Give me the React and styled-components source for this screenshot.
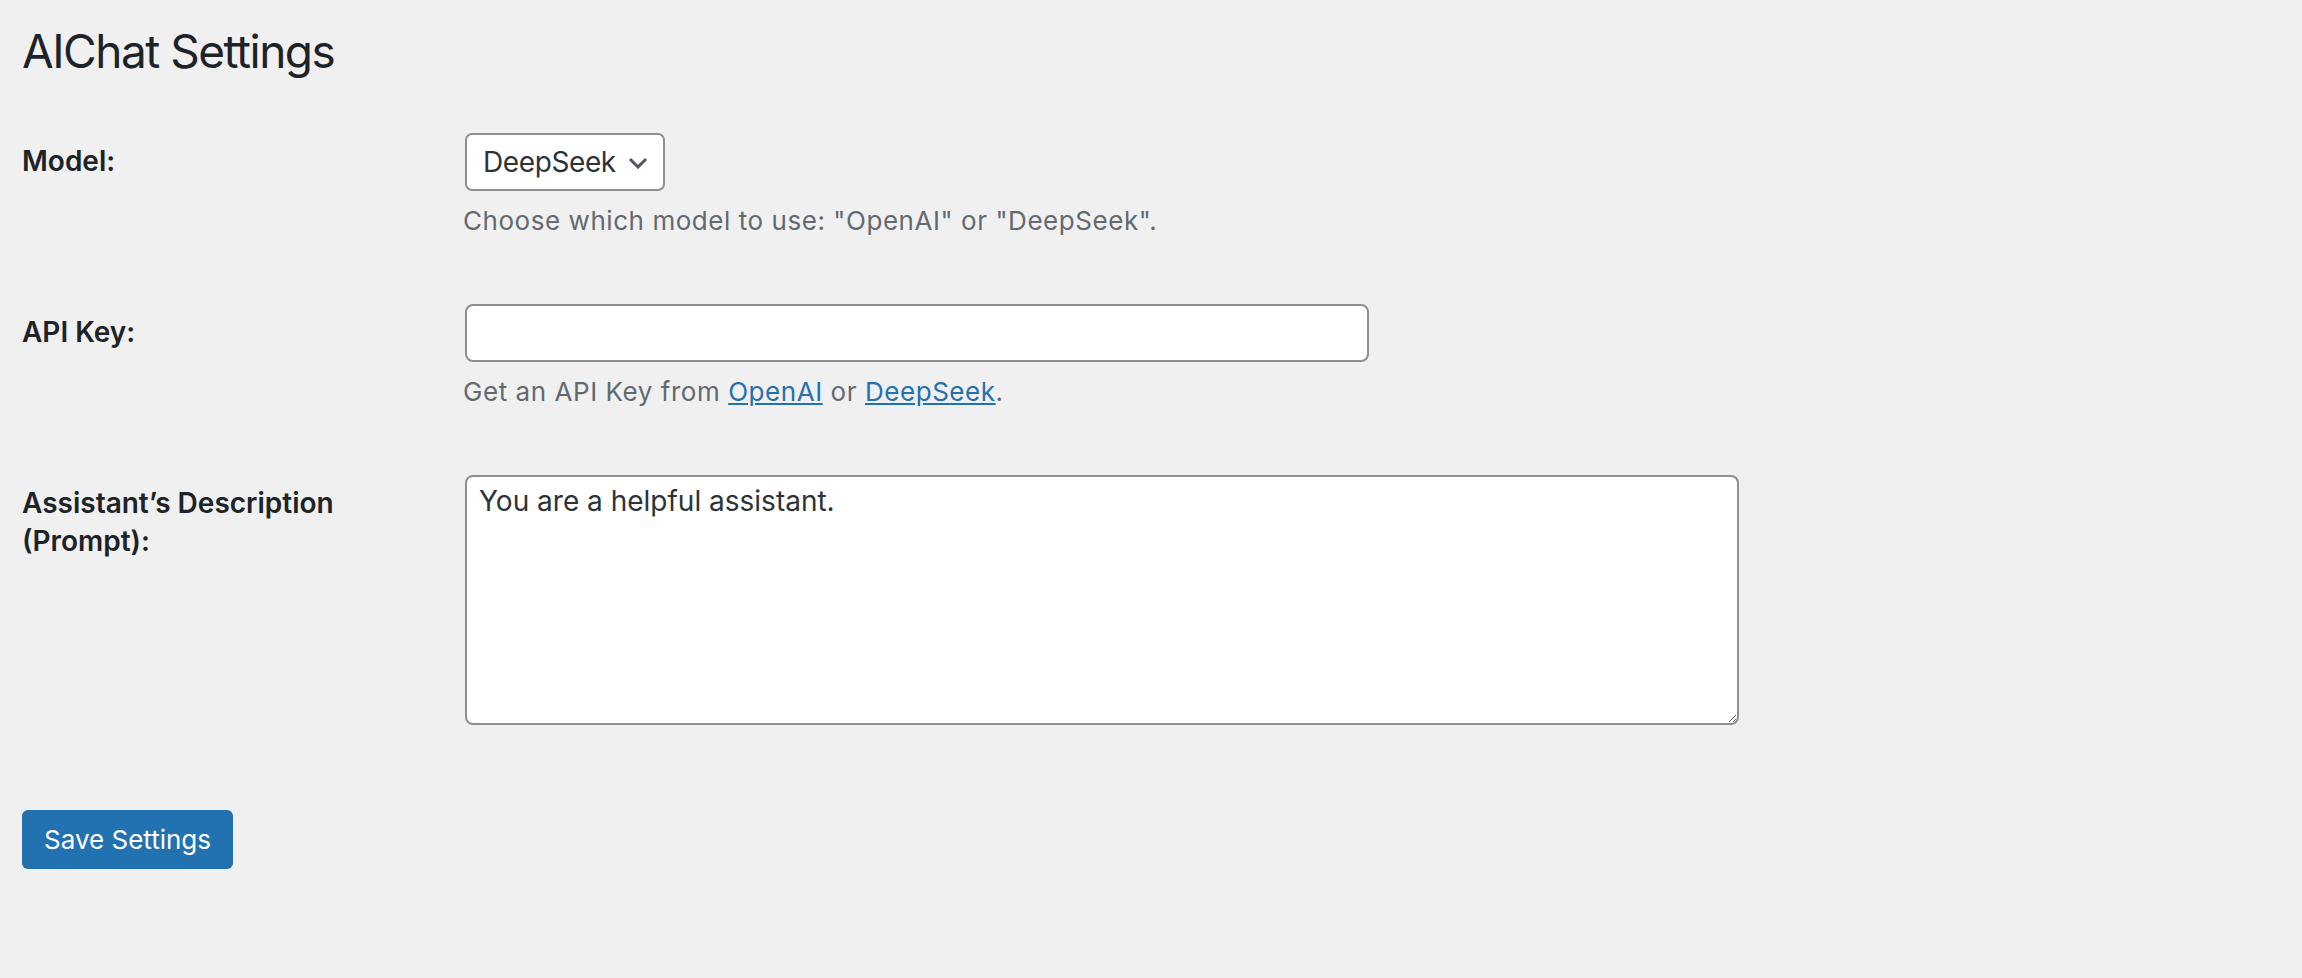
import React from "react";
import styled, { createGlobalStyle } from "styled-components";

const GlobalStyle = createGlobalStyle`
  body {
    margin: 0;
    background: #f0f0f1;
    color: #1d2327;
    font-family: Inter, "Noto Sans", sans-serif;
  }
`;

function App() {
  return (
    <>
      <GlobalStyle />
      <Wrap>
        <Title>AIChat Settings</Title>
        <Form onSubmit={(e) => e.preventDefault()}>
          <Row>
            <Label htmlFor="aichat-model">Model:</Label>
            <Field>
              <SelectBox>
                <Select id="aichat-model" defaultValue="deepseek">
                  <option value="openai">OpenAI</option>
                  <option value="deepseek">DeepSeek</option>
                </Select>
                <Chevron width="20" height="12" viewBox="0 0 20 12">
                  <path d="M2 2 L10 10 L18 2" fill="none" stroke="#50575e" strokeWidth="3" />
                </Chevron>
              </SelectBox>
              <Description>Choose which model to use: "OpenAI" or "DeepSeek".</Description>
            </Field>
          </Row>

          <Row>
            <Label htmlFor="aichat-key">API Key:</Label>
            <Field>
              <Input id="aichat-key" type="text" />
              <Description>
                Get an API Key from <Link href="#">OpenAI</Link> or{" "}
                <Link href="#">DeepSeek</Link>.
              </Description>
            </Field>
          </Row>

          <Row>
            <Label htmlFor="aichat-prompt">Assistant’s Description (Prompt):</Label>
            <Field>
              <TextArea id="aichat-prompt" defaultValue="You are a helpful assistant." />
            </Field>
          </Row>

          <Submit>
            <Button type="submit">Save Settings</Button>
          </Submit>
        </Form>
      </Wrap>
    </>
  );
}

export default App;

const Wrap = styled.div`
  padding: 3px 22px 0;
`;
const Title = styled.h1`
  margin: 0;
  padding: 18px 0 8px;
  font-size: 46px;
  font-weight: 400;
  line-height: 60px;
  letter-spacing: -1.5px;
  color: #1d2327;
`;
const Form = styled.form`
  margin-top: 13px;
`;
const Row = styled.div`
  display: grid;
  grid-template-columns: 441px 1fr;
  align-items: start;
`;
const Label = styled.label`
  width: 400px;
  padding: 40px 0;
  font-size: 28px;
  font-weight: 600;
  line-height: 38px;
  color: #1d2327;
`;
const Field = styled.div`
  display: flex;
  flex-direction: column;
  align-items: flex-start;
  padding: 31px 0 32px 2px;
`;
const SelectBox = styled.div`
  position: relative;
  display: inline-flex;
`;
const Select = styled.select`
  appearance: none;
  box-sizing: border-box;
  width: 200px;
  height: 58px;
  padding: 0 36px 0 16px;
  border: 2px solid #8c8f94;
  border-radius: 7px;
  background: #fff;
  font-family: inherit;
  font-size: 28px;
  letter-spacing: -0.4px;
  color: #2c3338;
`;
const Chevron = styled.svg`
  position: absolute;
  right: 17px;
  top: 24px;
  pointer-events: none;
`;
const Description = styled.p`
  margin: 10px 0 0 -2px;
  font-size: 26px;
  line-height: 40px;
  letter-spacing: 0.55px;
  color: #646970;
`;
const Link = styled.a`
  color: #2271b1;
  text-decoration: underline;
`;
const Input = styled.input`
  box-sizing: border-box;
  width: 904px;
  height: 58px;
  padding: 0 16px;
  border: 2px solid #8c8f94;
  border-radius: 8px;
  background: #fff;
  font-family: inherit;
  font-size: 28px;
  color: #2c3338;
`;
const TextArea = styled.textarea`
  box-sizing: border-box;
  width: 1274px;
  height: 250px;
  padding: 4px 12px;
  border: 2px solid #8c8f94;
  border-radius: 8px;
  background: #fff;
  font-family: inherit;
  font-size: 28px;
  line-height: 40px;
  color: #2c3338;
`;
const Submit = styled.p`
  margin: 53px 0 0;
`;
const Button = styled.button`
  height: 59px;
  padding: 0 22px;
  border: none;
  border-radius: 6px;
  background: #2271b1;
  color: #fff;
  font-family: inherit;
  font-size: 26px;
  cursor: pointer;
`;
